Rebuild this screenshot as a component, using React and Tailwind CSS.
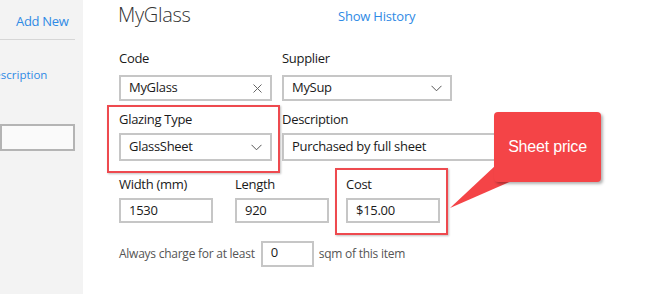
import React from "react";

function Chevron() {
  return (
    <svg width="11" height="7" viewBox="0 0 11 7" className="shrink-0">
      <path d="M0.5 0.8 L5.5 5.8 L10.5 0.8" fill="none" stroke="#555" strokeWidth="1" />
    </svg>
  );
}

function Cross() {
  return (
    <svg width="9" height="9" viewBox="0 0 9 9" className="shrink-0">
      <path d="M0.5 0.5 L8.5 8.5 M8.5 0.5 L0.5 8.5" fill="none" stroke="#666" strokeWidth="1" />
    </svg>
  );
}

function Label({ children }) {
  return <div className="h-[18px] text-[13px] leading-[18px] tracking-[-0.3px] text-[#1a1a1a] whitespace-nowrap">{children}</div>;
}

function Box({ children, className = "", right }) {
  return (
    <div className={"flex items-center border-2 border-[#c6c6c6] bg-white pl-[8px] pr-[8px] text-[13px] tracking-[-0.3px] text-[#1a1a1a] whitespace-nowrap overflow-hidden " + className}>
      <span className="flex-1">{children}</span>
      {right}
    </div>
  );
}

export default function App() {
  return (
    <div className="relative flex w-[650px] h-[294px] overflow-hidden bg-white font-['Open_Sans','Noto_Sans',sans-serif] text-[#1a1a1a]">
      {/* sidebar */}
      <div className="w-[83px] shrink-0 bg-[#f3f3f3] flex flex-col overflow-hidden">
        <div className="h-[39px] pl-[16px] pt-[12px] text-[13px] leading-[18px] tracking-[-0.3px] text-[#2f8ae5] whitespace-nowrap">Add New</div>
        <div className="w-[75px] h-px bg-[#d6d6d6]" />
        <div className="mt-[27px] -ml-[14px] text-[11.5px] leading-[16px] text-[#2f8ae5] whitespace-nowrap">Description</div>
        <div className="mt-[41px] w-[75px] h-[27px] border-2 border-[#b4b4b4] bg-[#fafafa]" />
      </div>

      {/* main */}
      <div className="flex-1 pl-[36px] flex flex-col">
        <div className="flex h-[30px] items-center">
          <div className="w-[220px] -ml-px text-[20px] font-light leading-[30px] tracking-[-0.3px] text-[#333]">MyGlass</div>
          <div className="mt-[1px] text-[13px] leading-[18px] tracking-[-0.2px] text-[#2f8ae5]">Show History</div>
        </div>

        {/* row 1 */}
        <div className="mt-[19px] flex gap-[10px]">
          <div className="w-[153px] flex flex-col">
            <Label>Code</Label>
            <Box className="mt-[8px] h-[26px]" right={<Cross />}>MyGlass</Box>
          </div>
          <div className="w-[170px] flex flex-col">
            <Label>Supplier</Label>
            <Box className="mt-[8px] h-[26px]" right={<Chevron />}>MySup</Box>
          </div>
        </div>

        {/* row 2 */}
        <div className="mt-[9px] flex gap-[10px]">
          <div className="relative w-[153px] flex flex-col">
            <Label>Glazing Type</Label>
            <Box className="mt-[5px] h-[28px]" right={<Chevron />}>GlassSheet</Box>
            <div className="absolute -left-[12px] -right-[8px] -top-[5px] -bottom-[12px] border-2 border-[#ee4a4f] shadow-[1px_1px_2px_rgba(0,0,0,0.25)] pointer-events-none" />
          </div>
          <div className="w-[258px] flex flex-col">
            <Label>Description</Label>
            <Box className="mt-[5px] h-[28px]">Purchased by full sheet</Box>
          </div>
        </div>

        {/* row 3 */}
        <div className="mt-[14px] flex">
          <div className="w-[94px] flex flex-col">
            <Label>Width (mm)</Label>
            <Box className="mt-[5px] h-[25px]">1530</Box>
          </div>
          <div className="ml-[22px] w-[94px] flex flex-col">
            <Label>Length</Label>
            <Box className="mt-[5px] h-[25px]">920</Box>
          </div>
          <div className="relative ml-[17px] w-[94px] flex flex-col">
            <Label>Cost</Label>
            <Box className="mt-[5px] h-[25px]">$15.00</Box>
            <div className="absolute -left-[11px] -right-[8px] -top-[7px] -bottom-[12px] border-2 border-[#ee4a4f] shadow-[1px_1px_2px_rgba(0,0,0,0.25)] pointer-events-none" />
          </div>
        </div>

        {/* row 4 */}
        <div className="mt-[18px] flex items-center text-[12px] tracking-[-0.25px] text-[#555] whitespace-nowrap">
          <span>Always charge for at least</span>
          <div className="ml-[6px] w-[53px] h-[26px] border-2 border-[#c6c6c6] pl-[8px] text-[13px] leading-[18px] text-[#1a1a1a]">0</div>
          <span className="ml-[5px]">sqm of this item</span>
        </div>
      </div>

      {/* callout annotation */}
      <svg className="absolute left-[440px] top-[150px] pointer-events-none" width="80" height="62" viewBox="440 150 80 62">
        <polygon points="496,165 450,208 514,180" fill="#f44447" />
      </svg>
      <div className="absolute left-[494px] top-[112px] w-[107px] h-[70px] rounded-[4px] bg-[#f44447] shadow-[2px_2px_3px_rgba(0,0,0,0.3)] flex items-center justify-center font-['Liberation_Sans',Arial,sans-serif] text-[16px] tracking-[-0.2px] text-white">
        Sheet price
      </div>
    </div>
  );
}
